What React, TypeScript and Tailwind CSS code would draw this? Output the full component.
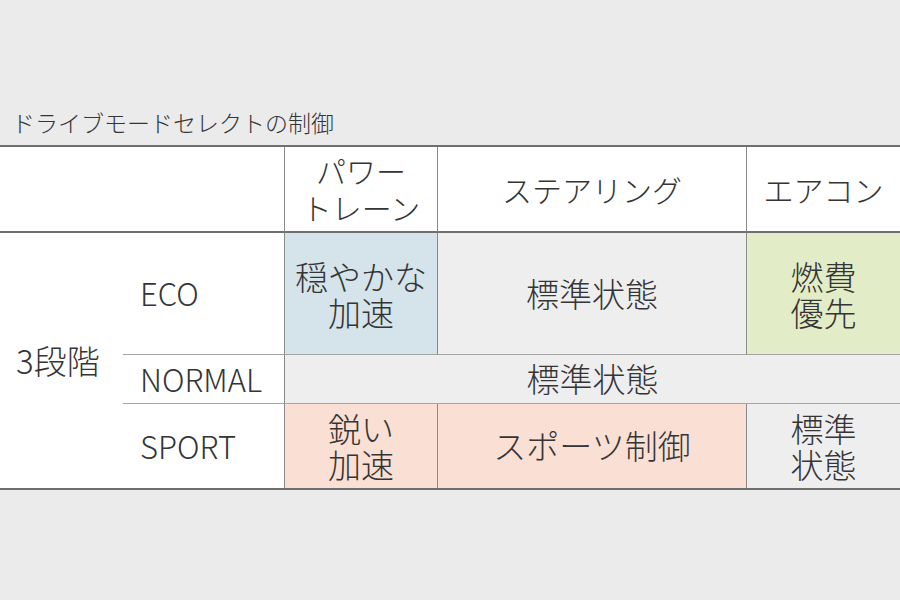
import React from 'react';

const font = { fontFamily: '"Noto Sans CJK JP", "Noto Sans", sans-serif' };

const App = () => {
  const cell = 'flex items-center justify-center text-center';
  return (
    <div className="w-[900px] h-[600px] bg-[#ebebeb] text-[#353535] font-light" style={font}>
      <div className="h-[145px] pt-[108px] pl-[12px] text-[23px] leading-[28px]">ドライブモードセレクトの制御</div>

      <div className="grid grid-cols-[123px_161px_153px_309px_154px] grid-rows-[86px_122px_49px_84px] border-t-2 border-b-2 border-[#6f6f6f] bg-white">
        {/* header */}
        <div className="col-span-2 border-b-2 border-[#6f6f6f]" />
        <div className={`${cell} border-l border-b-2 border-l-[#8a8a8a] border-b-[#6f6f6f] text-[30px] leading-[37px]`}>
          パワー<br />トレーン
        </div>
        <div className={`${cell} border-l border-b-2 border-l-[#8a8a8a] border-b-[#6f6f6f] text-[30px]`}>ステアリング</div>
        <div className={`${cell} border-l border-b-2 border-l-[#8a8a8a] border-b-[#6f6f6f] text-[30px]`}>エアコン</div>

        {/* 3段階 */}
        <div className="row-span-3 flex items-center pl-[16px] text-[33px]">3段階</div>

        {/* ECO */}
        <div className="flex items-center pl-[17px] text-[31px] border-b border-[#a5a5a5]">ECO</div>
        <div className={`${cell} bg-[#d5e3ea] border-l border-b border-l-[#8a8a8a] border-b-[#a5a5a5] text-[33px] leading-[36px]`}>
          穏やかな<br />加速
        </div>
        <div className={`${cell} bg-[#eeeeee] border-l border-b border-l-[#8a8a8a] border-b-[#a5a5a5] text-[33px]`}>標準状態</div>
        <div className={`${cell} bg-[#e2edc8] border-l border-b border-l-[#8a8a8a] border-b-[#a5a5a5] text-[33px] leading-[36px]`}>
          燃費<br />優先
        </div>

        {/* NORMAL */}
        <div className="flex items-center pl-[17px] text-[31px] border-b border-[#a5a5a5]">NORMAL</div>
        <div className={`${cell} col-span-3 bg-[#eeeeee] border-l border-b border-l-[#8a8a8a] border-b-[#a5a5a5] text-[33px]`}>標準状態</div>

        {/* SPORT */}
        <div className="flex items-center pl-[17px] text-[31px]">SPORT</div>
        <div className={`${cell} bg-[#fadfd4] border-l border-[#8a8a8a] text-[33px] leading-[36px]`}>
          鋭い<br />加速
        </div>
        <div className={`${cell} bg-[#fadfd4] border-l border-[#8a8a8a] text-[33px]`}>スポーツ制御</div>
        <div className={`${cell} bg-[#eeeeee] border-l border-[#8a8a8a] text-[33px] leading-[36px]`}>
          標準<br />状態
        </div>
      </div>
    </div>
  );
};

export default App;
